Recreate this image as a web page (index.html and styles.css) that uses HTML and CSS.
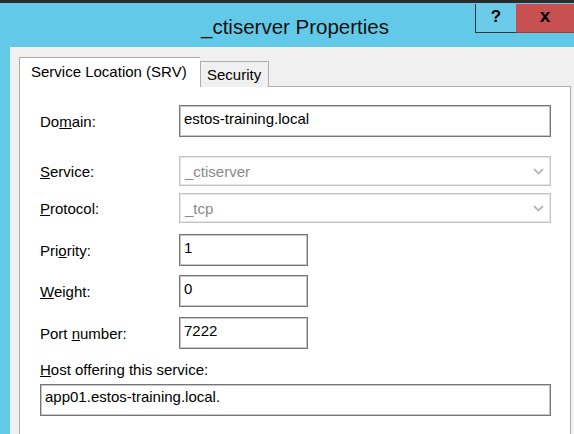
FILE: index.html
```html
<!DOCTYPE html>
<html lang="en">
<head>
<meta charset="utf-8">
<title>_ctiserver Properties</title>
<link rel="stylesheet" href="styles.css">
</head>
<body>
<div class="window">
  <div class="titlebar">
    <div class="title">_ctiserver Properties</div>
    <div class="controls">
      <div class="btn help">?</div>
      <div class="btn close">x</div>
    </div>
  </div>
  <div class="client">
    <div class="tabs">
      <div class="tab active">Service Location (SRV)</div>
      <div class="tab">Security</div>
    </div>
    <div class="panel">
      <div class="row row-domain">
        <div class="label">Do<u>m</u>ain:</div>
        <div class="edit wide">estos-training.local</div>
      </div>
      <div class="row row-service">
        <div class="label"><u>S</u>ervice:</div>
        <div class="select">_ctiserver<svg class="chev" width="11" height="7" viewBox="0 0 11 7"><polyline points="1,1 5.5,5.5 10,1" fill="none" stroke="#b8b8b8" stroke-width="1.8"/></svg></div>
      </div>
      <div class="row row-protocol">
        <div class="label"><u>P</u>rotocol:</div>
        <div class="select">_tcp<svg class="chev" width="11" height="7" viewBox="0 0 11 7"><polyline points="1,1 5.5,5.5 10,1" fill="none" stroke="#b8b8b8" stroke-width="1.8"/></svg></div>
      </div>
      <div class="row row-priority">
        <div class="label">Pri<u>o</u>rity:</div>
        <div class="edit short">1</div>
      </div>
      <div class="row row-weight">
        <div class="label"><u>W</u>eight:</div>
        <div class="edit short">0</div>
      </div>
      <div class="row row-port">
        <div class="label">Port <u>n</u>umber:</div>
        <div class="edit short">7222</div>
      </div>
      <div class="host-label"><u>H</u>ost offering this service:</div>
      <div class="edit host">app01.estos-training.local.</div>
    </div>
  </div>
</div>
</body>
</html>
```

FILE: styles.css
```css
html, body {
  margin: 0;
  padding: 0;
}
body {
  width: 574px;
  height: 434px;
  overflow: hidden;
  background: #62c9e8;
  font-family: "Liberation Sans", Arial, sans-serif;
  font-size: 15px;
  color: #000;
}
.window {
  border-top: 3px solid #2b2b2b;
  height: 431px;
  display: flex;
  flex-direction: column;
  background: #62c9e8;
}
.titlebar {
  height: 44px;
  display: flex;
  flex-shrink: 0;
}
.title {
  flex: 1;
  text-align: center;
  padding-left: 115px;
  padding-top: 12px;
  font-size: 20.5px;
  line-height: 24px;
  color: #111;
}
.controls {
  display: flex;
  align-items: flex-start;
  padding-top: 1px;
}
.btn {
  height: 29px;
  box-sizing: border-box;
  display: flex;
  align-items: center;
  justify-content: center;
  font-weight: bold;
  font-size: 17px;
}
.help {
  width: 41px;
  border: 1px solid #2f3a40;
  border-top: none;
  border-right: none;
  background: #6ccbe8;
  padding-bottom: 3px;
}
.close {
  width: 58px;
  background: #c75050;
  border-bottom: 1px solid #9a3a3a;
  font-size: 19px;
  padding-bottom: 5px;
}
.client {
  flex: 1;
  margin-left: 10px;
  background: #f0f0f0;
  padding: 10px 0 0 9px;
  display: flex;
  flex-direction: column;
}
.tabs {
  display: flex;
  align-items: flex-end;
  position: relative;
  z-index: 1;
  margin-bottom: -1px;
}
.tab {
  box-sizing: border-box;
  height: 26px;
  width: 69px;
  border: 1px solid #adadad;
  border-bottom: none;
  background: #f0f0f0;
  padding-left: 6px;
  line-height: 26px;
}
.tab.active {
  width: 181px;
  height: 30px;
  background: #fff;
  border-right: none;
  padding-left: 11px;
  line-height: 28px;
}
.panel {
  width: 552px;
  box-sizing: border-box;
  flex: 1;
  background: #fff;
  border: 1px solid #adadad;
  border-bottom: none;
  padding: 0 0 0 20px;
}
.row {
  display: flex;
  align-items: center;
}
.label {
  width: 139px;
  flex-shrink: 0;
  line-height: 17px;
  color: #000;
}
.edit {
  box-sizing: border-box;
  height: 32px;
  border: 1px solid #777;
  box-shadow: inset 0 0 0 1px #c6c6c6;
  background: #fff;
  padding: 4px 0 0 4px;
  line-height: 17px;
  white-space: nowrap;
}
.edit.wide { width: 372px; }
.edit.short { width: 129px; }
.select {
  box-sizing: border-box;
  width: 372px;
  height: 30px;
  border: 1px solid #c3c3c3;
  box-shadow: inset 0 0 0 1px #e6e6e6;
  padding: 0 0 0 5px;
  display: flex;
  align-items: center;
  color: #8a8a8a;
}
.chev {
  margin-left: auto;
  margin-right: 6px;
}
.row-domain { margin-top: 18px; }
.row-service { margin-top: 19px; }
.row-protocol { margin-top: 7px; }
.row-priority { margin-top: 11px; }
.row-weight { margin-top: 9px; }
.row-port { margin-top: 10px; }
.host-label {
  margin-top: 12px;
  line-height: 17px;
}
.edit.host {
  margin-top: 6px;
  width: 511px;
  padding-top: 3px;
}
```
